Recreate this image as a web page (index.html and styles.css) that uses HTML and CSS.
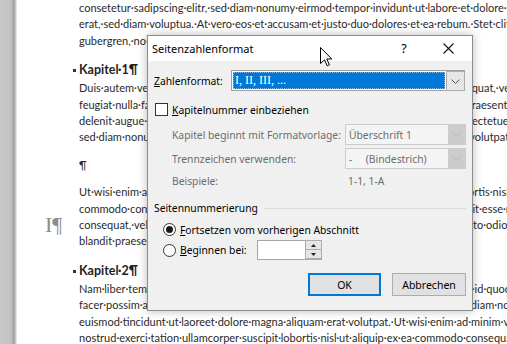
FILE: index.html
```html
<!DOCTYPE html>
<html lang="de">
<head>
    <meta charset="UTF-8">
    <meta name="viewport" content="width=device-width, initial-scale=1.0">
    <title>Seitenzahlenformat</title>
    <link rel="stylesheet" href="styles.css">
</head>
<body>
    <div class="workspace">
        <div class="page">
            <p class="para">consetetur·sadipscing·elitr,·sed·diam·nonumy·eirmod·tempor·invidunt·ut·labore·et·dolore·magna·aliquyam<br>erat,·sed·diam·voluptua.·At·vero·eos·et·accusam·et·justo·duo·dolores·et·ea·rebum.·Stet·clita·kasd<br>gubergren,·no·sea·takimata·sanctus·est·Lorem·ipsum·dolor·sit·amet.¶</p>

            <h2 class="chapter">Kapitel·1¶</h2>
            <p class="para">Duis·autem·vel·eum·iriure·dolor·in·hendrerit·in·vulputate·velit·esse·molestie·consequat,·vel·illum·dolore·eu<br>feugiat·nulla·facilisis·at·vero·eros·et·accumsan·et·iusto·odio·dignissim·qui·blandit·praesent·luptatum·zzril<br>delenit·augue·duis·dolore·te·feugait·nulla·facilisi.·Lorem·ipsum·dolor·sit·amet,·consectetuer·adipiscing·elit,<br>sed·diam·nonummy·nibh·euismod·tincidunt·ut·laoreet·dolore·magna·aliquam·erat·volutpat.¶</p>
            <p class="para">¶</p>
            <p class="para">Ut·wisi·enim·ad·minim·veniam,·quis·nostrud·exerci·tation·ullamcorper·suscipit·lobortis·nisl·ut·aliquip·ex·ea<br>commodo·consequat.·Duis·autem·vel·eum·iriure·dolor·in·hendrerit·in·vulputate·velit·esse·molestie<br><span class="margin-mark">I¶</span>consequat,·vel·illum·dolore·eu·feugiat·nulla·facilisis·at·vero·eros·et·accumsan·et·iusto·odio·dignissim·qui<br>blandit·praesent·luptatum·zzril·delenit·augue·duis·dolore·te·feugait·nulla·facilisi.¶</p>

            <h2 class="chapter">Kapitel·2¶</h2>
            <p class="para">Nam·liber·tempor·cum·soluta·nobis·eleifend·option·congue·nihil·imperdiet·doming·id·quod·mazim·placerat<br>facer·possim·assum.·Lorem·ipsum·dolor·sit·amet,·consectetuer·adipiscing·elit,·sed·diam·nonummy·nibh<br>euismod·tincidunt·ut·laoreet·dolore·magna·aliquam·erat·volutpat.·Ut·wisi·enim·ad·minim·veniam,·quis<br>nostrud·exerci·tation·ullamcorper·suscipit·lobortis·nisl·ut·aliquip·ex·ea·commodo·consequat.¶</p>
        </div>
    </div>

    <div class="dialog">
        <div class="titlebar">
            <span class="title">Seitenzahlenformat</span>
            <span class="help">?</span>
            <span class="close">
                <svg width="11" height="11" viewBox="0 0 11 11"><path d="M0.5 0.5 L10.5 10.5 M10.5 0.5 L0.5 10.5" stroke="#111" stroke-width="1.1" fill="none"/></svg>
            </span>
        </div>

        <div class="dlg-body">
            <div class="fmt-row">
                <span class="fmt-label"><u>Z</u>ahlenformat:</span>
                <div class="combo active">
                    <span class="combo-value"><span class="selected">I, II, III, ...</span></span>
                    <span class="combo-btn">
                        <svg width="9" height="5" viewBox="0 0 9 5"><path d="M0.5 0.5 L4.5 4.5 L8.5 0.5" stroke="#555" fill="none"/></svg>
                    </span>
                </div>
            </div>

            <div class="check-row">
                <span class="checkbox"></span>
                <span><u>K</u>apitelnummer einbeziehen</span>
            </div>

            <div class="chapter-grid">
                <span class="muted">Kapitel beginnt mit Formatvorlage:</span>
                <div class="combo disabled">
                    <span class="combo-value">Überschrift 1</span>
                    <span class="combo-btn">
                        <svg width="9" height="5" viewBox="0 0 9 5"><path d="M0.5 0.5 L4.5 4.5 L8.5 0.5" stroke="#b5b5b5" fill="none"/></svg>
                    </span>
                </div>
                <span class="muted">Trennzeichen verwenden:</span>
                <div class="combo disabled">
                    <span class="combo-value">-&nbsp;&nbsp;&nbsp;&nbsp;&nbsp;(Bindestrich)</span>
                    <span class="combo-btn">
                        <svg width="9" height="5" viewBox="0 0 9 5"><path d="M0.5 0.5 L4.5 4.5 L8.5 0.5" stroke="#b5b5b5" fill="none"/></svg>
                    </span>
                </div>
                <span class="muted">Beispiele:</span>
                <span class="muted example">1-1, 1-A</span>
            </div>

            <div class="group-label"><span>Seitennummerierung</span></div>

            <div class="radio-row">
                <span class="radio checked"></span>
                <span><u>F</u>ortsetzen vom vorherigen Abschnitt</span>
            </div>
            <div class="radio-row start-row">
                <span class="radio"></span>
                <span class="start-label"><u>B</u>eginnen bei:</span>
                <div class="spin">
                    <span class="spin-field"></span>
                    <span class="spin-btns">
                        <span class="spin-btn"><svg width="5" height="3" viewBox="0 0 5 3"><path d="M0 3 L2.5 0 L5 3 Z" fill="#222"/></svg></span>
                        <span class="spin-btn"><svg width="5" height="3" viewBox="0 0 5 3"><path d="M0 0 L2.5 3 L5 0 Z" fill="#222"/></svg></span>
                    </span>
                </div>
            </div>

            <div class="buttons">
                <button class="btn default">OK</button>
                <button class="btn">Abbrechen</button>
            </div>
        </div>
    </div>

    <svg class="cursor" width="13" height="20" viewBox="0 0 13 20"><path d="M0.5 0.5 L0.5 16.5 L4.5 12.8 L7.2 18.8 L9.4 17.8 L6.8 12 L11.8 12 Z" fill="#fff" stroke="#000" stroke-width="1"/></svg>
</body>
</html>
```

FILE: styles.css
```css
html, body { margin: 0; overflow: hidden; }
body { width: 507px; height: 344px; position: relative; background: #fff; }

/* Word-Dokument im Hintergrund, links der graue Rand */
.workspace { height: 344px; overflow: hidden; padding-left: 17px; background: linear-gradient(to right, #c8c8c8 0, #c3c3c3 11px, #a0a0a0 14px, #d4d4d4 16px, #f2f2f2 17px) no-repeat 0 0 / 17px 100%; }
.page { height: 344px; overflow: hidden; background: #fff; padding-left: 62px; font-family: "Lato", "Open Sans", sans-serif; font-size: 11px; color: #2a2a2a; white-space: nowrap; }
.para { margin: 0 0 11px; line-height: 16.4px; }
.chapter { position: relative; margin: 0 0 1px; font-size: 12.5px; font-weight: bold; line-height: 19px; color: #1f1f1f; }
.chapter::before { content: ""; position: absolute; left: -6px; top: 9px; width: 3px; height: 3px; background: #333; }
.margin-mark { display: inline-block; width: 0; margin-left: -34px; margin-right: 34px; font-family: "Liberation Serif", serif; font-size: 22px; line-height: 16px; color: #8c8c8c; vertical-align: top; }

/* Dialog */
.dialog { position: absolute; left: 147px; top: 35px; width: 324px; height: 274px; border: 1px solid #8c8c8c; background: #f0f0f0; box-shadow: 0 0 9px rgba(0, 0, 0, 0.28); font-family: "Noto Sans", sans-serif; font-size: 10.3px; color: #000; }
.titlebar { height: 25px; background: #fff; display: flex; align-items: center; padding-left: 4px; font-size: 11px; }
.title { flex: 1; }
.help { width: 20px; text-align: center; font-size: 12.5px; margin-right: 29px; }
.close { width: 11px; height: 11px; margin-right: 18px; display: flex; }

.dlg-body { padding: 9px 6px 0 6px; }
.fmt-row { display: flex; align-items: center; height: 21px; }
.fmt-label { width: 77px; }

.combo { display: flex; height: 21px; box-sizing: border-box; border: 1px solid #a0a0a0; background: #fff; }
.combo-value { flex: 1; display: flex; align-items: center; padding: 1px; }
.combo-btn { width: 17px; display: flex; align-items: center; justify-content: center; background: #e6e6e6; border-left: 1px solid #c4c4c4; }
.combo.active { width: 234px; }
.combo.active .combo-btn { border: 1px solid #acacac; margin: 0 -1px -1px 0; }
.selected { flex: 1; align-self: stretch; display: flex; align-items: center; padding-left: 2px; background: #0078d7; color: #fff; font-family: "Liberation Serif", serif; font-size: 12px; outline: 1px dotted #7fb6e6; outline-offset: -1px; }
.combo.disabled { border-color: #cccccc; background: #f4f4f4; color: #6d6d6d; }
.combo.disabled .combo-value { padding-left: 3px; }
.combo.disabled .combo-btn { background: #cccccc; border-left: none; }

.check-row { display: flex; align-items: center; height: 13px; margin-top: 12px; padding-left: 1px; }
.checkbox { width: 11px; height: 11px; border: 1px solid #333; background: #fff; margin-right: 4px; }

.chapter-grid { display: grid; grid-template-columns: 173px 121px; grid-template-rows: 21px 21px 18px; row-gap: 3px; align-items: center; margin-top: 8px; padding-left: 18px; }
.muted { color: #6d6d6d; }
.example { padding-left: 3px; }

.group-label { display: flex; align-items: center; gap: 6px; margin-top: 11px; height: 14px; }
.group-label::after { content: ""; flex: 1; height: 1px; background: #dcdcdc; }

.radio-row { display: flex; align-items: center; height: 13px; padding-left: 9px; margin-top: 8px; }
.radio { width: 11px; height: 11px; border: 1px solid #333; border-radius: 50%; background: #fff; margin-right: 4px; display: flex; align-items: center; justify-content: center; }
.radio.checked::after { content: ""; width: 7px; height: 7px; border-radius: 50%; background: #1a1a1a; }
.start-row { height: 20px; margin-top: 4px; }
.start-label { width: 77px; }
.spin { display: flex; width: 65px; height: 20px; box-sizing: border-box; border: 1px solid #a6a6a6; background: #fff; }
.spin-field { flex: 1; }
.spin-btns { width: 16px; display: flex; flex-direction: column; }
.spin-btn { flex: 1; display: flex; align-items: center; justify-content: center; background: #e5e5e5; border: 1px solid #adadad; margin: -1px -1px 0 0; }

.buttons { display: flex; justify-content: flex-end; gap: 11px; margin-top: 13px; }
.btn { width: 74px; height: 23px; box-sizing: border-box; border: 1px solid #adadad; background: #e1e1e1; font-family: "Noto Sans", sans-serif; font-size: 10.5px; color: #000; padding: 0; }
.btn.default { width: 73px; border: 2px solid #0078d7; }

.cursor { position: absolute; left: 320px; top: 47px; }
```
